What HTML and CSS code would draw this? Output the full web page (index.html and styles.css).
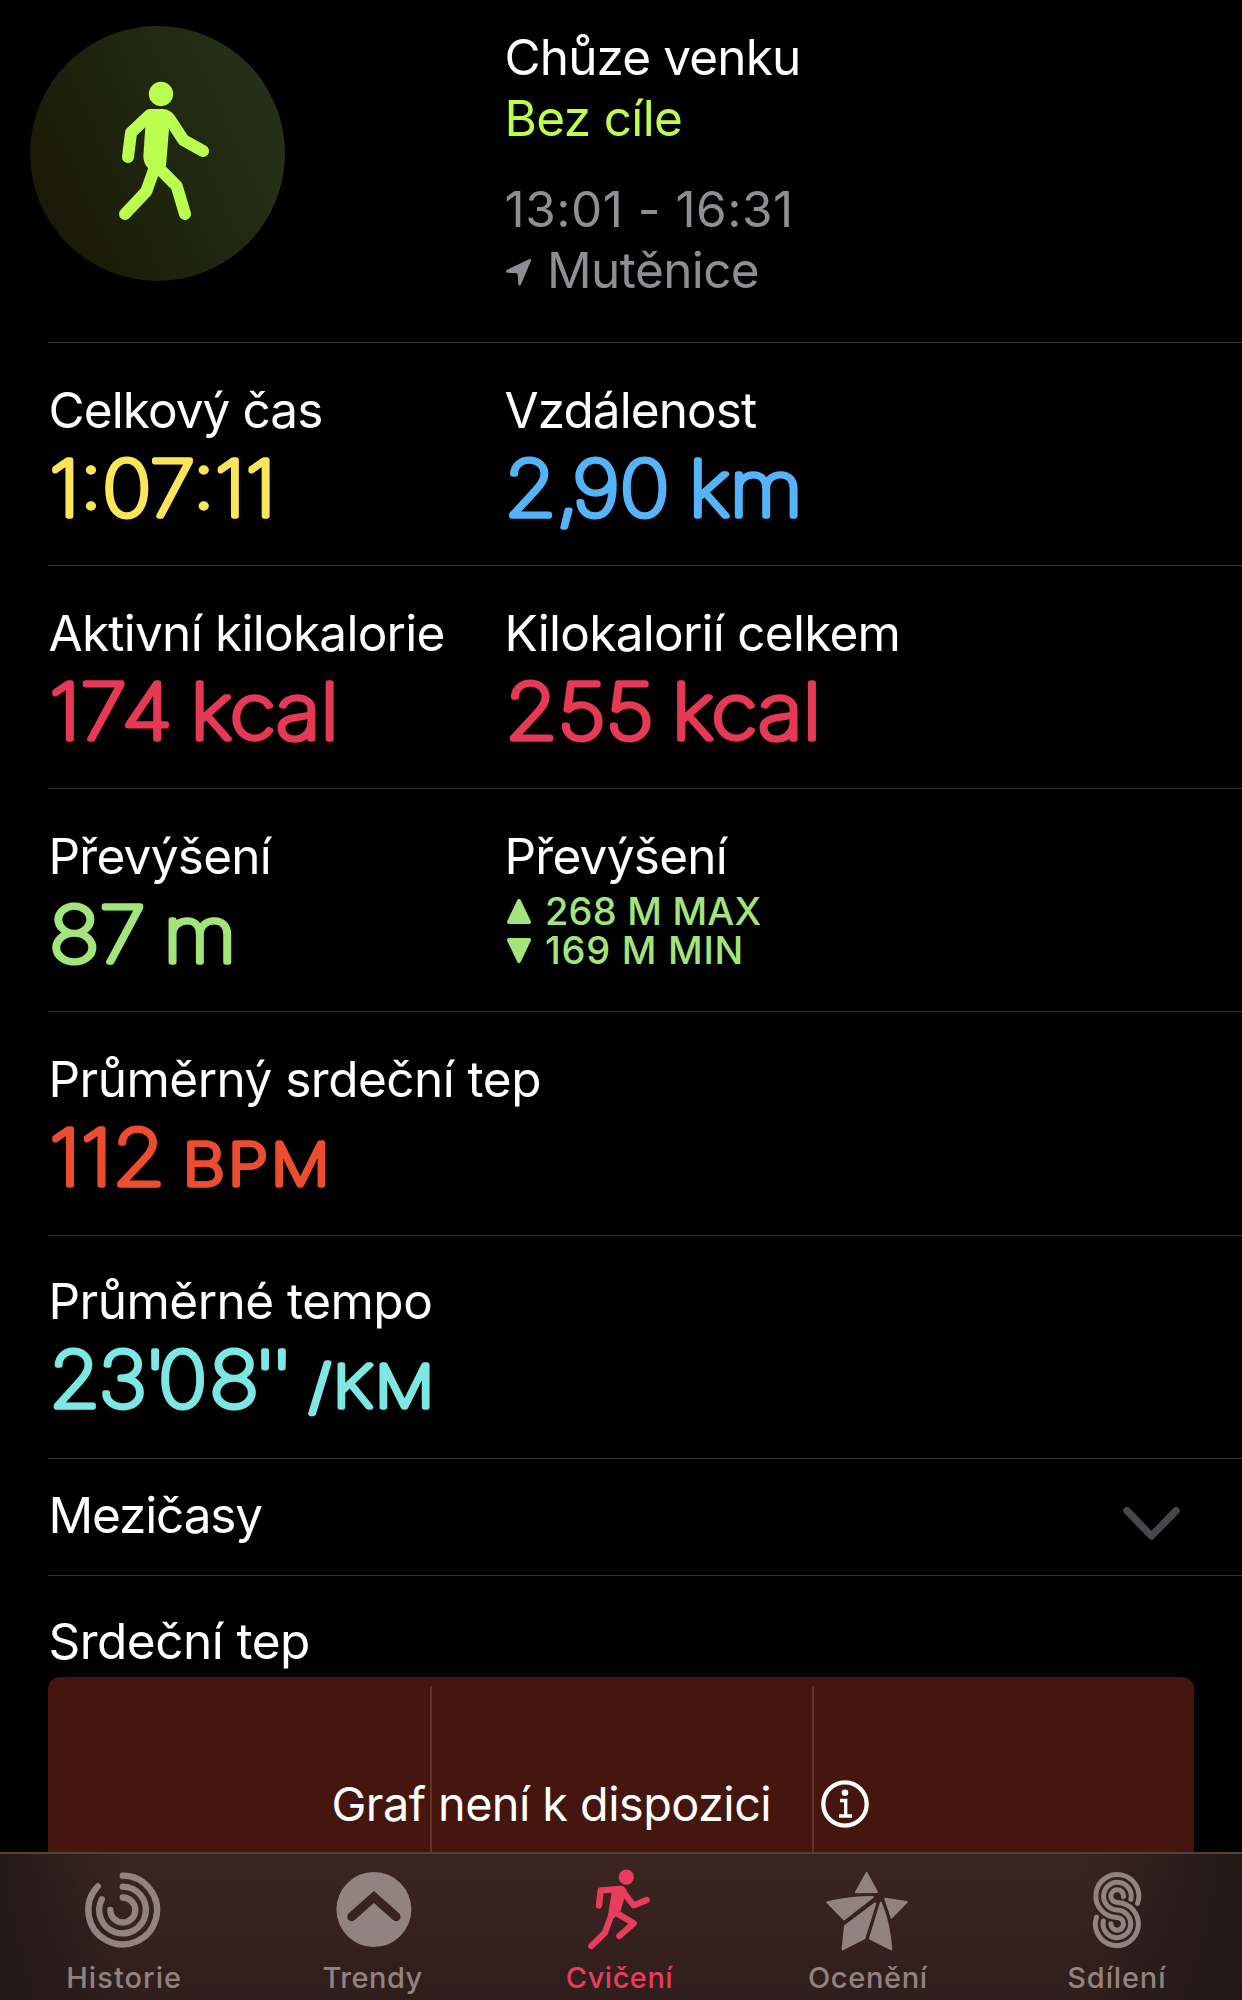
FILE: index.html
```html
<!DOCTYPE html>
<html lang="cs">
<head>
<meta charset="utf-8">
<title>Chůze venku</title>
<link rel="stylesheet" href="styles.css">
</head>
<body>
<main class="screen">
  <header class="summary">
    <div class="badge">
      <svg viewBox="90 78 765 765" width="255" height="255">
        <circle cx="483" cy="282" r="36.5"/>
        <path d="M447 335H488L507 388L498 498L449 508Q430 494 430 468L436 382Z"/>
        <g class="limb">
          <path d="M384 471L393 398L449 345H488Q501 346 509 357L551 421L609 453"/>
          <path d="M466 498L439 574L375 642"/>
          <path d="M480 508L530 558L555 642"/>
        </g>
      </svg>
    </div>
    <div class="info">
      <div class="title">Chůze venku</div>
      <div class="goal">Bez cíle</div>
      <div class="time">13:01 - 16:31</div>
      <div class="place">
        <svg viewBox="78 777 75 81" width="25" height="27"><path d="M149 777Q154 777 153 782L122 855Q118 860 115 853L113 824Q112 820 108 820L81 818Q76 814 80 810Z"/></svg>
        <span>Mutěnice</span>
      </div>
    </div>
  </header>

  <section class="row">
    <div class="cell">
      <div class="label tight">Celkový čas</div>
      <svg class="value yellow"><text x="1.3" y="75.6" textLength="226.6" lengthAdjust="spacingAndGlyphs">1:07:11</text></svg>
    </div>
    <div class="cell">
      <div class="label tight">Vzdálenost</div>
      <svg class="value blue distance"><text transform="scale(1.1 1)" x="0.3" y="75.6" dx="0 0 -6 0 0 -4">2,90 km</text></svg>
    </div>
  </section>

  <section class="row">
    <div class="cell">
      <div class="label">Aktivní kilokalorie</div>
      <svg class="value red"><text x="1.3" y="75.6" textLength="289.6" lengthAdjust="spacingAndGlyphs">174 kcal</text></svg>
    </div>
    <div class="cell">
      <div class="label">Kilokalorií celkem</div>
      <svg class="value red"><text x="1" y="75.6" textLength="316" lengthAdjust="spacingAndGlyphs">255 kcal</text></svg>
    </div>
  </section>

  <section class="row">
    <div class="cell">
      <div class="label">Převýšení</div>
      <svg class="value green"><text x="1.3" y="75.6" textLength="187" lengthAdjust="spacingAndGlyphs">87 m</text></svg>
    </div>
    <div class="cell">
      <div class="label">Převýšení</div>
      <div class="range">
        <div class="max"><svg viewBox="0 0 24 25" width="24" height="25"><path d="M12 2L22 23H2Z"/></svg><span>268 M MAX</span></div>
        <div class="min"><svg viewBox="0 0 24 25" width="24" height="25"><path d="M12 23L22 2H2Z"/></svg><span>169 M MIN</span></div>
      </div>
    </div>
  </section>

  <section class="row pulse">
    <div class="cell">
      <div class="label loose">Průměrný srdeční tep</div>
      <svg class="value orange"><text x="1.3" y="75.6" textLength="116" lengthAdjust="spacingAndGlyphs">112</text><text class="unit bpm" transform="scale(1.13 1)" x="119.2" y="75.6">BPM</text></svg>
    </div>
  </section>

  <section class="row pace">
    <div class="cell">
      <div class="label loose">Průměrné tempo</div>
      <svg class="value cyan"><text transform="scale(1.08 1)" x="1 47 88.600 102 149.500 190.500 206" y="75.6">23'08''</text><text class="unit km" transform="scale(1.13 1)" x="231.3" y="75.6">/KM</text></svg>
    </div>
  </section>

  <section class="splits">
    <div class="label splits-label">Mezičasy</div>
    <svg class="chevron" viewBox="189 200 171 100" width="57" height="33"><path d="M200 211L274.500 288L349 211"/></svg>
  </section>

  <section class="heart">
    <div class="label loose">Srdeční tep</div>
    <div class="chart">
      <i></i><i></i><i></i>
      <div class="message">
        <span>Graf není k dispozici</span>
        <svg viewBox="-24 -24 48 48" width="48" height="48"><circle class="ring" r="21.700"/><circle class="dot" cy="-11.300" r="3.300"/><path d="M-5 -3.500H.7V12M-6 12H7"/></svg>
      </div>
    </div>
  </section>

  <nav class="tabs">
    <a class="tab historie">
      <svg viewBox="192.6 42 360 315"><g class="arcs"><path d="M369 107A103 103 0 1 1 294 139"/><path d="M369 140A70 70 0 1 1 306 178"/><path d="M369 172.500A37.500 37.500 0 1 1 331.500 210"/></g></svg>
      <span>Historie</span>
    </a>
    <a class="tab trendy">
      <svg viewBox="937.8 42 360 315"><circle cx="1120.500" cy="208.500" r="112.500"/><path class="cut" d="M1054 230L1120.500 171L1187 230"/></svg>
      <span>Trendy</span>
    </a>
    <a class="tab active">
      <svg viewBox="423 42 360 315">
        <circle cx="619" cy="111.500" r="23"/>
        <path d="M576 150L600 137Q613 137 620 150L612 178L602 213L582 235L564 225Z"/>
        <g class="run"><path d="M537 196L542 151L600 147"/><path d="M606 151L641 196L680 180"/><path d="M574 225L555 278L514 318"/><path d="M588 218L641 250L598 288"/></g>
      </svg>
      <span>Cvičení</span>
    </a>
    <a class="tab oceneni">
      <svg viewBox="-31.8 42 360 315"><g class="star"><path d="M141 99L172 156L109 157Z"/><path d="M23 187Q90 171 160 171L73 238Z"/><path d="M167 190L134 295L69 328L76 258Z"/><path d="M184 188Q210 252 215 328L151 296Z"/><path d="M197 176L261 186L216 233Z"/></g></svg>
      <span>Ocenění</span>
    </a>
    <a class="tab sdileni">
      <svg viewBox="713.4 42 360 315"><g class="ess"><path d="M952 190A64.500 64.500 0 1 0 891 232.500A19 19 0 1 1 872 251"/><path d="M932 178A41.500 41.500 0 1 0 891 210A41.500 41.500 0 1 1 849.500 243"/><path d="M910 170A19 19 0 1 0 891 187.500A64.500 64.500 0 1 1 829 231"/></g></svg>
      <span>Sdílení</span>
    </a>
  </nav>
</main>
</body>
</html>
```
FILE: styles.css
```css
* { box-sizing: border-box; }
body {
  margin: 0;
  background: #000;
  color: #fff;
  font-family: Inter, "Liberation Sans", sans-serif;
}
svg { display: block; flex: none; }
.screen {
  width: 1242px;
  height: 2000px;
  display: flex;
  flex-direction: column;
  overflow: hidden;
}

/* Workout summary */
.summary {
  display: flex;
  height: 343px;
  padding: 26px 0 0 30px;
  background: linear-gradient(#2f2f31, #2f2f31) 48px 100% / 100% 1px no-repeat;
}
.badge {
  width: 255px;
  height: 255px;
  margin-right: 219px;
  border-radius: 50%;
  background: linear-gradient(65deg, #191a07 15%, #1f240f 45%, #263018 88%);
}
.badge svg { fill: #baff4f; }
.limb { fill: none; stroke: #baff4f; stroke-width: 36; stroke-linecap: round; stroke-linejoin: round; }
.info { padding: 1px 0 0 0.5px; font-size: 49.5px; line-height: 61px; white-space: nowrap; }
.title { letter-spacing: -0.88px; }
.goal { color: #baff4f; letter-spacing: -0.65px; }
.time { margin-top: 30px; color: #8e8e93; letter-spacing: 0.5px; }
.place { display: flex; gap: 16px; padding-left: 1.5px; color: #8e8e93; letter-spacing: -0.6px; }
.place svg { margin-top: 19px; fill: #8e8e93; }

/* Metric rows */
.row {
  display: grid;
  grid-template-columns: 456px 1fr;
  height: 223px;
  margin-left: 48px;
  padding-top: 37px;
  border-bottom: 1px solid #2f2f31;
}
.pulse { height: 224px; }
.pace { padding-top: 35px; }
.label {
  padding-left: 0.5px;
  font-size: 49.5px;
  line-height: 60px;
  letter-spacing: -0.74px;
  white-space: nowrap;
}
.tight { letter-spacing: -0.92px; }
.loose { letter-spacing: -0.52px; }
.splits-label { letter-spacing: -1.15px; }
.value {
  width: 440px;
  height: 100px;
  overflow: visible;
  fill: currentColor;
  stroke: currentColor;
  stroke-width: 5.5;
  stroke-linejoin: round;
  font-size: 76.5px;
  font-weight: 100;
  word-spacing: -5px;
}
.distance { word-spacing: 0; }
.unit { font-size: 58px; }
.bpm { letter-spacing: 3px; }
.km { letter-spacing: 2.5px; }
.yellow { color: #fce556; }
.blue { color: #55b4f9; }
.red { color: #e63956; }
.green { color: #a3e57b; }
.orange { color: #ec4d2e; }
.cyan { color: #7ce7e3; }

.range { padding: 6px 0 0 3px; color: #a3e57b; font-size: 38px; font-weight: 500; line-height: 39px; }
.range div { display: flex; gap: 14px; }
.range svg { margin-top: 7px; fill: #a3e57b; stroke: #a3e57b; stroke-width: 4; stroke-linejoin: round; }
.max { letter-spacing: 0.2px; }
.min { letter-spacing: 0.75px; }

/* Splits */
.splits {
  display: flex;
  justify-content: space-between;
  height: 117px;
  margin-left: 48px;
  padding: 26px 62px 0 0;
  border-bottom: 1px solid #2f2f31;
}
.chevron { margin-top: 22px; fill: none; stroke: #48474b; stroke-width: 22; stroke-linecap: round; stroke-linejoin: round; }

/* Heart-rate chart */
.heart { height: 276px; padding: 35px 48px 0; }
.chart {
  display: grid;
  grid-template-columns: repeat(3, 382px);
  height: 175px;
  margin-top: 6px;
  border-radius: 12px 12px 0 0;
  background: #45160d;
}
.chart i { grid-area: 1 / 1; margin-top: 9px; }
.chart i + i { grid-area: 1 / 2; border-left: 2px solid #5f342b; }
.chart i + i + i { grid-area: 1 / 3; }
.message {
  grid-area: 1 / 1 / 2 / 4;
  display: flex;
  gap: 50px;
  padding: 99px 0 0 283.5px;
  font-size: 46.8px;
  line-height: 57px;
  letter-spacing: -0.55px;
  white-space: nowrap;
}
.message svg { margin-top: 4px; fill: none; stroke: #fff; stroke-width: 3.3; }
.message .ring { stroke-width: 4.3; }
.message .dot { fill: #fff; stroke: none; }

/* Tab bar */
.tabs {
  display: grid;
  grid-template-columns: repeat(5, 1fr);
  height: 148px;
  border-top: 2px solid #553f3c;
  background:
    linear-gradient(90deg, rgba(30, 24, 22, 0.8), transparent 10%, transparent 87%, rgba(30, 24, 22, 0.9)),
    linear-gradient(#3a2520, #36211e 50%, #2f1e1c);
}
.tab {
  display: flex;
  flex-direction: column;
  align-items: center;
  color: #928280;
  font-size: 29px;
  font-weight: 500;
  line-height: 36px;
}
.tab svg { width: 120px; height: 105px; fill: currentColor; }
.tab span { margin-top: 1px; }
.arcs, .run, .ess, .cut { fill: none; stroke: currentColor; stroke-width: 19; stroke-linecap: round; }
.cut { stroke: #38231f; stroke-width: 27; }
.run { stroke-linejoin: round; }
.ess { stroke-width: 15; }
.star { stroke: currentColor; stroke-width: 6; stroke-linejoin: round; }
.historie { letter-spacing: 1.05px; }
.trendy { letter-spacing: 0.5px; }
.active { color: #ea3c5c; letter-spacing: 0.5px; }
.active span { margin-right: 3px; }
.oceneni { letter-spacing: 0.65px; }
.oceneni span { margin-right: 3px; }
.sdileni { letter-spacing: 0.85px; }
.sdileni span { margin-right: 2px; }
```
